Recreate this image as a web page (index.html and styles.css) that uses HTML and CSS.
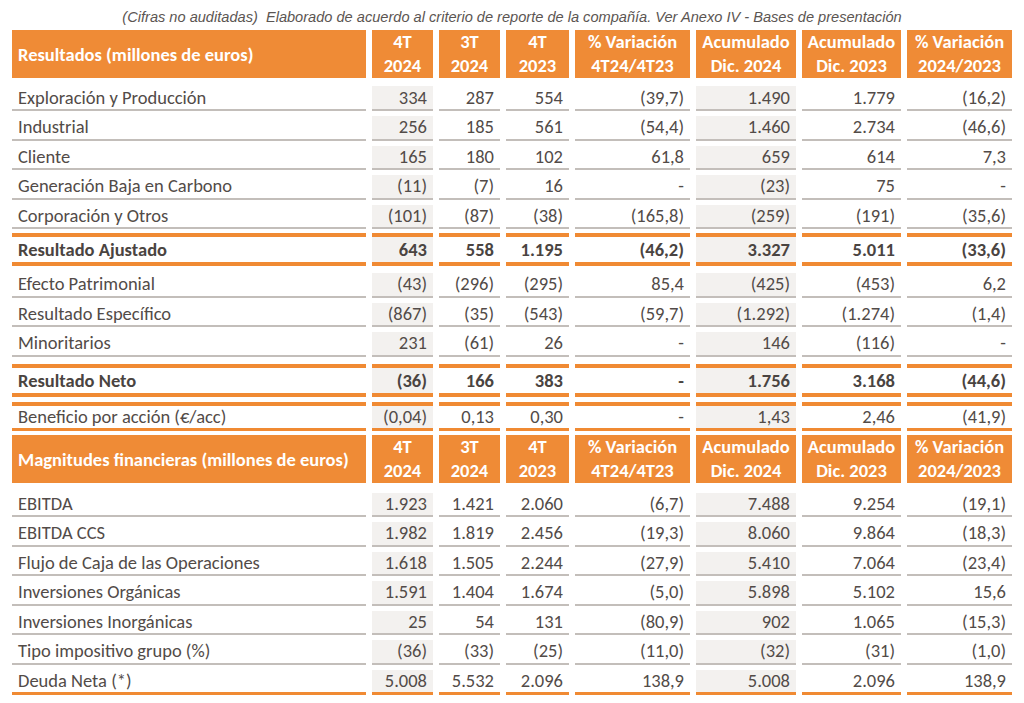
FILE: index.html
```html
<!DOCTYPE html>
<html lang="es">
<head>
<meta charset="utf-8">
<title>Resultados</title>
<link rel="stylesheet" href="styles.css">
</head>
<body>
<div class="page">
  <p class="note">(Cifras no auditadas)&nbsp; Elaborado de acuerdo al criterio de reporte de la compañía. Ver Anexo IV - Bases de presentación</p>

  <div class="grid hdr">
    <div class="c lab">Resultados (millones de euros)</div>
    <div class="c">4T<br>2024</div>
    <div class="c">3T<br>2024</div>
    <div class="c">4T<br>2023</div>
    <div class="c">% Variación<br>4T24/4T23</div>
    <div class="c">Acumulado<br>Dic. 2024</div>
    <div class="c">Acumulado<br>Dic. 2023</div>
    <div class="c">% Variación<br>2024/2023</div>
  </div>

  <div class="grid row first">
    <div class="c lab">Exploración y Producción</div><div class="c sh">334</div><div class="c">287</div><div class="c">554</div><div class="c">(39,7)</div><div class="c sh">1.490</div><div class="c">1.779</div><div class="c">(16,2)</div>
  </div>
  <div class="grid row">
    <div class="c lab">Industrial</div><div class="c sh">256</div><div class="c">185</div><div class="c">561</div><div class="c">(54,4)</div><div class="c sh">1.460</div><div class="c">2.734</div><div class="c">(46,6)</div>
  </div>
  <div class="grid row">
    <div class="c lab">Cliente</div><div class="c sh">165</div><div class="c">180</div><div class="c">102</div><div class="c">61,8</div><div class="c sh">659</div><div class="c">614</div><div class="c">7,3</div>
  </div>
  <div class="grid row">
    <div class="c lab">Generación Baja en Carbono</div><div class="c sh">(11)</div><div class="c">(7)</div><div class="c">16</div><div class="c">-</div><div class="c sh">(23)</div><div class="c">75</div><div class="c">-</div>
  </div>
  <div class="grid row">
    <div class="c lab">Corporación y Otros</div><div class="c sh">(101)</div><div class="c">(87)</div><div class="c">(38)</div><div class="c">(165,8)</div><div class="c sh">(259)</div><div class="c">(191)</div><div class="c">(35,6)</div>
  </div>

  <div class="grid total t1">
    <div class="c lab">Resultado Ajustado</div><div class="c sh">643</div><div class="c">558</div><div class="c">1.195</div><div class="c">(46,2)</div><div class="c sh">3.327</div><div class="c">5.011</div><div class="c">(33,6)</div>
  </div>

  <div class="grid row after-total">
    <div class="c lab">Efecto Patrimonial</div><div class="c sh">(43)</div><div class="c">(296)</div><div class="c">(295)</div><div class="c">85,4</div><div class="c sh">(425)</div><div class="c">(453)</div><div class="c">6,2</div>
  </div>
  <div class="grid row">
    <div class="c lab">Resultado Específico</div><div class="c sh">(867)</div><div class="c">(35)</div><div class="c">(543)</div><div class="c">(59,7)</div><div class="c sh">(1.292)</div><div class="c">(1.274)</div><div class="c">(1,4)</div>
  </div>
  <div class="grid row">
    <div class="c lab">Minoritarios</div><div class="c sh">231</div><div class="c">(61)</div><div class="c">26</div><div class="c">-</div><div class="c sh">146</div><div class="c">(116)</div><div class="c">-</div>
  </div>

  <div class="grid total t2">
    <div class="c lab">Resultado Neto</div><div class="c sh">(36)</div><div class="c">166</div><div class="c">383</div><div class="c">-</div><div class="c sh">1.756</div><div class="c">3.168</div><div class="c">(44,6)</div>
  </div>

  <div class="grid eps">
    <div class="c lab">Beneficio por acción (€/acc)</div><div class="c sh">(0,04)</div><div class="c">0,13</div><div class="c">0,30</div><div class="c">-</div><div class="c sh">1,43</div><div class="c">2,46</div><div class="c">(41,9)</div>
  </div>

  <div class="grid hdr hdr2">
    <div class="c lab">Magnitudes financieras (millones de euros)</div>
    <div class="c">4T<br>2024</div>
    <div class="c">3T<br>2024</div>
    <div class="c">4T<br>2023</div>
    <div class="c">% Variación<br>4T24/4T23</div>
    <div class="c">Acumulado<br>Dic. 2024</div>
    <div class="c">Acumulado<br>Dic. 2023</div>
    <div class="c">% Variación<br>2024/2023</div>
  </div>

  <div class="grid row first2">
    <div class="c lab">EBITDA</div><div class="c sh">1.923</div><div class="c">1.421</div><div class="c">2.060</div><div class="c">(6,7)</div><div class="c sh">7.488</div><div class="c">9.254</div><div class="c">(19,1)</div>
  </div>
  <div class="grid row">
    <div class="c lab">EBITDA CCS</div><div class="c sh">1.982</div><div class="c">1.819</div><div class="c">2.456</div><div class="c">(19,3)</div><div class="c sh">8.060</div><div class="c">9.864</div><div class="c">(18,3)</div>
  </div>
  <div class="grid row">
    <div class="c lab">Flujo de Caja de las Operaciones</div><div class="c sh">1.618</div><div class="c">1.505</div><div class="c">2.244</div><div class="c">(27,9)</div><div class="c sh">5.410</div><div class="c">7.064</div><div class="c">(23,4)</div>
  </div>
  <div class="grid row">
    <div class="c lab">Inversiones Orgánicas</div><div class="c sh">1.591</div><div class="c">1.404</div><div class="c">1.674</div><div class="c">(5,0)</div><div class="c sh">5.898</div><div class="c">5.102</div><div class="c">15,6</div>
  </div>
  <div class="grid row">
    <div class="c lab">Inversiones Inorgánicas</div><div class="c sh">25</div><div class="c">54</div><div class="c">131</div><div class="c">(80,9)</div><div class="c sh">902</div><div class="c">1.065</div><div class="c">(15,3)</div>
  </div>
  <div class="grid row">
    <div class="c lab">Tipo impositivo grupo (%)</div><div class="c sh">(36)</div><div class="c">(33)</div><div class="c">(25)</div><div class="c">(11,0)</div><div class="c sh">(32)</div><div class="c">(31)</div><div class="c">(1,0)</div>
  </div>
  <div class="grid row last">
    <div class="c lab">Deuda Neta (*)</div><div class="c sh">5.008</div><div class="c">5.532</div><div class="c">2.096</div><div class="c">138,9</div><div class="c sh">5.008</div><div class="c">2.096</div><div class="c">138,9</div>
  </div>
</div>
</body>
</html>
```

FILE: styles.css
```css
* { box-sizing: border-box; margin: 0; padding: 0; }

html, body {
  background: #ffffff;
  width: 1024px;
  height: 703px;
  overflow: hidden;
}

body {
  font-family: Carlito, Lato, "Liberation Sans", sans-serif;
  font-size: 18.5px;
  color: #524b48;
}

.page {
  padding-left: 12px;
  width: 1024px;
}

.note {
  font-family: "Liberation Sans", Arial, sans-serif;
  font-style: italic;
  font-size: 14.6px;
  color: #5b5552;
  width: 1000px;
  text-align: center;
  padding-top: 8px;
  height: 30px;
  line-height: 18px;
}

.grid {
  display: grid;
  grid-template-columns: 354px 61px 61px 63px 115px 100px 99px 105px;
  column-gap: 6px;
  width: 1000px;
}

.c {
  text-align: right;
  padding-right: 6px;
  white-space: nowrap;
  background-clip: padding-box;
  display: flex;
  align-items: center;
  justify-content: flex-end;
}

.c.lab {
  justify-content: flex-start;
  text-align: left;
  padding-left: 6px;
  padding-right: 0;
}

/* header rows */
.hdr .c {
  background: #ef8b36;
  color: #ffffff;
  font-weight: bold;
  height: 48px;
  line-height: 24px;
  justify-content: center;
  text-align: center;
  padding-right: 0;
}

.hdr .c.lab {
  justify-content: flex-start;
  text-align: left;
  padding-top: 2px;
}

.hdr2 { margin-top: 4.5px; }

/* normal data rows */
.row .c {
  height: 29.5px;
  border-top: 5px solid transparent;
  border-bottom: 2px solid #c3beba;
  line-height: 22px;
}

.row.first .c { height: 33px; border-top-width: 8px; }
.row.after-total .c { height: 31.5px; border-top-width: 7px; }
.row.first2 .c { height: 34px; border-top-width: 10px; }
.row.last .c {
  height: 30.5px;
  border-top-width: 5.5px;
  border-bottom: 3px solid #f08a33;
}

.c.sh { background-color: #f3f1ef; }

/* total rows */
.total .c {
  font-weight: bold;
  color: #4a4441;
  border-top: 4px solid #f08a33;
  border-bottom: 4px solid #f08a33;
  height: 33px;
}

.total.t1 { margin-top: 4px; }
.total.t2 { margin-top: 7.5px; }

/* earnings per share row */
.eps { margin-top: 5px; }
.eps .c {
  border-top: 4px solid #f08a33;
  border-bottom: 3.5px solid #f08a33;
  height: 28.5px;
}
```
